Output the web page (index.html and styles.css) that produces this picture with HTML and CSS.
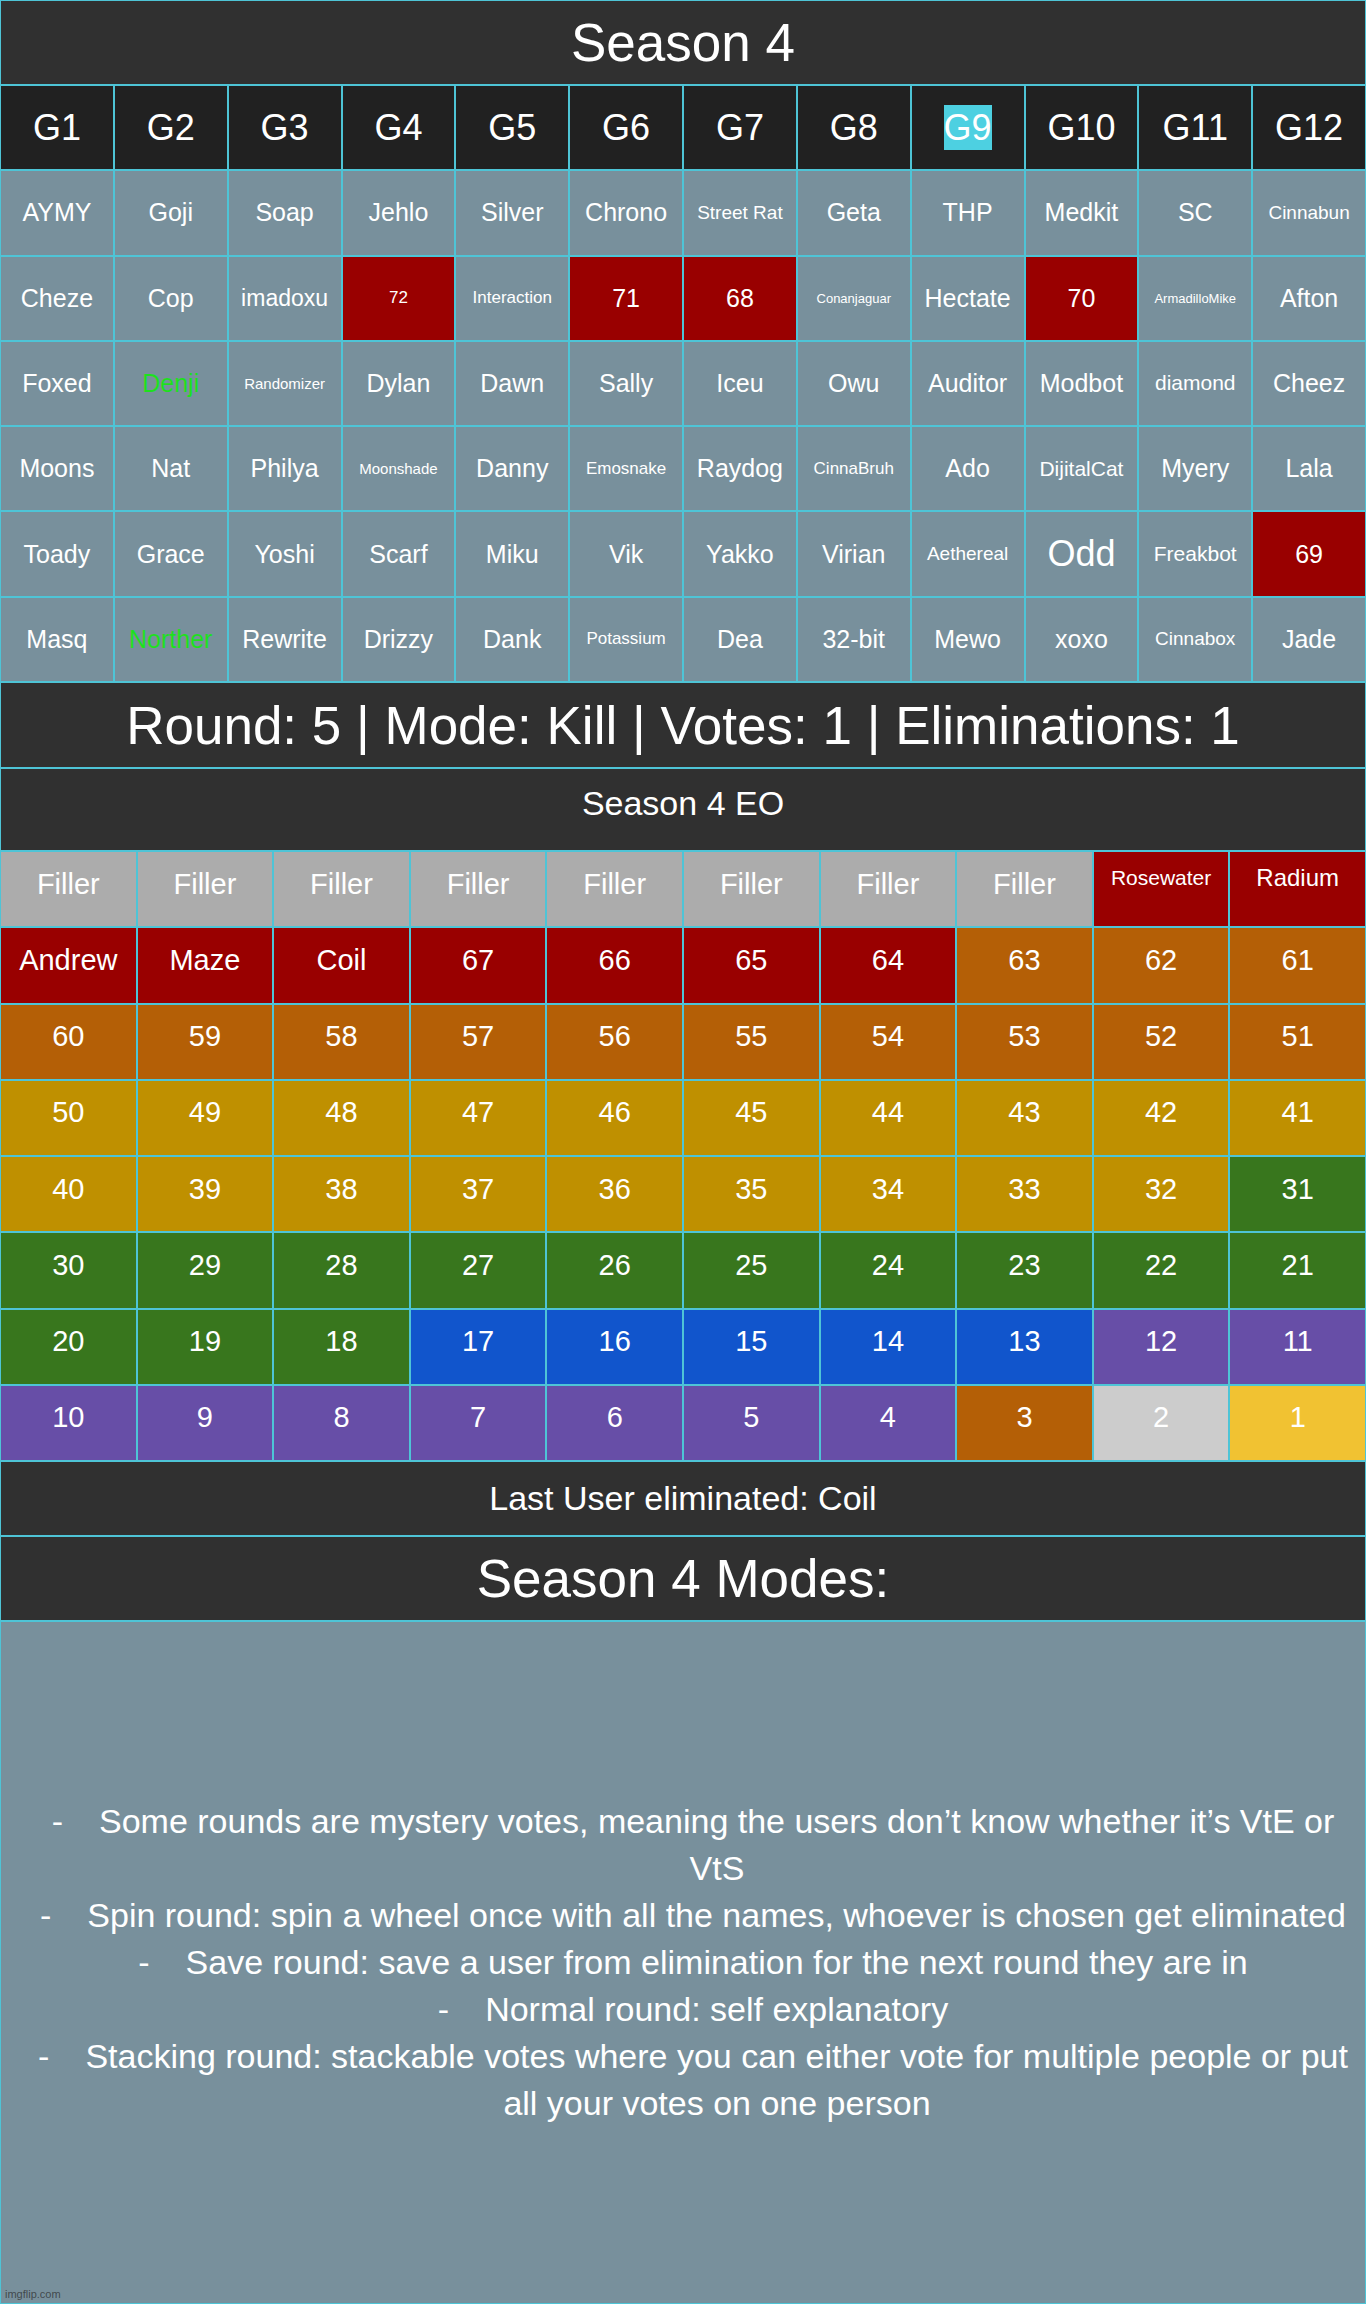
FILE: index.html
```html
<!DOCTYPE html>
<html lang="en">
<head>
    <meta charset="UTF-8">
    <meta name="viewport" content="width=device-width, initial-scale=1.0">
    <title>Season 4</title>
    <link rel="stylesheet" href="styles.css">
</head>
<body>
    <div class="board">
        <div class="banner banner-big">Season 4</div>

        <!-- Groups -->
        <div class="groups">
            <div class="gh">G1</div>
            <div class="gh">G2</div>
            <div class="gh">G3</div>
            <div class="gh">G4</div>
            <div class="gh">G5</div>
            <div class="gh">G6</div>
            <div class="gh">G7</div>
            <div class="gh">G8</div>
            <div class="gh"><span class="current">G9</span></div>
            <div class="gh">G10</div>
            <div class="gh">G11</div>
            <div class="gh">G12</div>

            <div class="cell">AYMY</div>
            <div class="cell">Goji</div>
            <div class="cell">Soap</div>
            <div class="cell">Jehlo</div>
            <div class="cell">Silver</div>
            <div class="cell">Chrono</div>
            <div class="cell s19">Street Rat</div>
            <div class="cell">Geta</div>
            <div class="cell">THP</div>
            <div class="cell">Medkit</div>
            <div class="cell">SC</div>
            <div class="cell s19">Cinnabun</div>

            <div class="cell">Cheze</div>
            <div class="cell">Cop</div>
            <div class="cell s23">imadoxu</div>
            <div class="cell out s17">72</div>
            <div class="cell s17">Interaction</div>
            <div class="cell out">71</div>
            <div class="cell out">68</div>
            <div class="cell s13">Conanjaguar</div>
            <div class="cell">Hectate</div>
            <div class="cell out">70</div>
            <div class="cell s13">ArmadilloMike</div>
            <div class="cell">Afton</div>

            <div class="cell">Foxed</div>
            <div class="cell safe">Denji</div>
            <div class="cell s15">Randomizer</div>
            <div class="cell">Dylan</div>
            <div class="cell">Dawn</div>
            <div class="cell">Sally</div>
            <div class="cell">Iceu</div>
            <div class="cell">Owu</div>
            <div class="cell">Auditor</div>
            <div class="cell">Modbot</div>
            <div class="cell s21">diamond</div>
            <div class="cell">Cheez</div>

            <div class="cell">Moons</div>
            <div class="cell">Nat</div>
            <div class="cell">Philya</div>
            <div class="cell s15">Moonshade</div>
            <div class="cell">Danny</div>
            <div class="cell s17">Emosnake</div>
            <div class="cell">Raydog</div>
            <div class="cell s17">CinnaBruh</div>
            <div class="cell">Ado</div>
            <div class="cell s21">DijitalCat</div>
            <div class="cell">Myery</div>
            <div class="cell">Lala</div>

            <div class="cell">Toady</div>
            <div class="cell">Grace</div>
            <div class="cell">Yoshi</div>
            <div class="cell">Scarf</div>
            <div class="cell">Miku</div>
            <div class="cell">Vik</div>
            <div class="cell">Yakko</div>
            <div class="cell">Virian</div>
            <div class="cell s19">Aethereal</div>
            <div class="cell s36">Odd</div>
            <div class="cell s21">Freakbot</div>
            <div class="cell out">69</div>

            <div class="cell">Masq</div>
            <div class="cell safe">Norther</div>
            <div class="cell">Rewrite</div>
            <div class="cell">Drizzy</div>
            <div class="cell">Dank</div>
            <div class="cell s17">Potassium</div>
            <div class="cell">Dea</div>
            <div class="cell">32-bit</div>
            <div class="cell">Mewo</div>
            <div class="cell">xoxo</div>
            <div class="cell s19">Cinnabox</div>
            <div class="cell">Jade</div>
        </div>

        <div class="banner banner-round">Round: 5 | Mode: Kill | Votes: 1 | Eliminations: 1</div>
        <div class="banner banner-eo">Season 4 EO</div>

        <!-- Elimination order -->
        <div class="eo">
            <div class="place filler">Filler</div>
            <div class="place filler">Filler</div>
            <div class="place filler">Filler</div>
            <div class="place filler">Filler</div>
            <div class="place filler">Filler</div>
            <div class="place filler">Filler</div>
            <div class="place filler">Filler</div>
            <div class="place filler">Filler</div>
            <div class="place red top s21">Rosewater</div>
            <div class="place red top s24">Radium</div>

            <div class="place red">Andrew</div>
            <div class="place red">Maze</div>
            <div class="place red">Coil</div>
            <div class="place red">67</div>
            <div class="place red">66</div>
            <div class="place red">65</div>
            <div class="place red">64</div>
            <div class="place orange">63</div>
            <div class="place orange">62</div>
            <div class="place orange">61</div>

            <div class="place orange">60</div>
            <div class="place orange">59</div>
            <div class="place orange">58</div>
            <div class="place orange">57</div>
            <div class="place orange">56</div>
            <div class="place orange">55</div>
            <div class="place orange">54</div>
            <div class="place orange">53</div>
            <div class="place orange">52</div>
            <div class="place orange">51</div>

            <div class="place gold">50</div>
            <div class="place gold">49</div>
            <div class="place gold">48</div>
            <div class="place gold">47</div>
            <div class="place gold">46</div>
            <div class="place gold">45</div>
            <div class="place gold">44</div>
            <div class="place gold">43</div>
            <div class="place gold">42</div>
            <div class="place gold">41</div>

            <div class="place gold">40</div>
            <div class="place gold">39</div>
            <div class="place gold">38</div>
            <div class="place gold">37</div>
            <div class="place gold">36</div>
            <div class="place gold">35</div>
            <div class="place gold">34</div>
            <div class="place gold">33</div>
            <div class="place gold">32</div>
            <div class="place green">31</div>

            <div class="place green">30</div>
            <div class="place green">29</div>
            <div class="place green">28</div>
            <div class="place green">27</div>
            <div class="place green">26</div>
            <div class="place green">25</div>
            <div class="place green">24</div>
            <div class="place green">23</div>
            <div class="place green">22</div>
            <div class="place green">21</div>

            <div class="place green">20</div>
            <div class="place green">19</div>
            <div class="place green">18</div>
            <div class="place blue">17</div>
            <div class="place blue">16</div>
            <div class="place blue">15</div>
            <div class="place blue">14</div>
            <div class="place blue">13</div>
            <div class="place purple">12</div>
            <div class="place purple">11</div>

            <div class="place purple">10</div>
            <div class="place purple">9</div>
            <div class="place purple">8</div>
            <div class="place purple">7</div>
            <div class="place purple">6</div>
            <div class="place purple">5</div>
            <div class="place purple">4</div>
            <div class="place orange">3</div>
            <div class="place silver">2</div>
            <div class="place yellow">1</div>
        </div>

        <div class="banner banner-last">Last User eliminated: Coil</div>
        <div class="banner banner-big">Season 4 Modes:</div>

        <div class="modes">
            <div class="rule"><span class="dash">-</span>Some rounds are mystery votes, meaning the users don’t know whether it’s VtE or VtS</div>
            <div class="rule"><span class="dash">-</span>Spin round: spin a wheel once with all the names, whoever is chosen get eliminated</div>
            <div class="rule"><span class="dash">-</span>Save round: save a user from elimination for the next round they are in</div>
            <div class="rule"><span class="dash">-</span>Normal round: self explanatory</div>
            <div class="rule"><span class="dash">-</span>Stacking round: stackable votes where you can either vote for multiple people or put all your votes on one person</div>
            <span class="watermark">imgflip.com</span>
        </div>
    </div>
</body>
</html>
```

FILE: styles.css
```css
/* Global */
body {
    margin: 0;
    padding: 0;
    font-family: "Liberation Sans", Arial, sans-serif;
    color: #ffffff;
    background: #4ec4d6;
}

/* The whole board, cyan shows through the gaps as grid lines */
.board {
    width: 1366px;
    height: 2304px;
    box-sizing: border-box;
    padding: 1px;
    display: flex;
    flex-direction: column;
    gap: 2px;
    background: #4ec4d6;
}

/* Dark title bars */
.banner {
    background: #303030;
    display: flex;
    align-items: center;
    justify-content: center;
    white-space: nowrap;
}

.banner-big {
    height: 83px;
    font-size: 53px;
}

.banner-round {
    height: 84px;
    font-size: 53px;
}

.banner-eo {
    height: 81px;
    font-size: 34px;
    padding-bottom: 12px;
    box-sizing: border-box;
}

.banner-last {
    height: 73px;
    font-size: 34px;
}

/* Groups table */
.groups {
    height: 595px;
    display: grid;
    grid-template-columns: repeat(12, 1fr);
    grid-template-rows: repeat(7, 1fr);
    gap: 2px;
}

.gh,
.cell {
    display: flex;
    align-items: center;
    justify-content: center;
    white-space: nowrap;
    overflow: hidden;
}

.gh {
    background: #212121;
    font-size: 36px;
}

.gh .current {
    background: #4dd0e1;
    line-height: 45px;
}

.cell {
    background: #78909c;
    font-size: 25px;
}

.cell.out {
    background: #990000;
}

.cell.safe {
    color: #1ee01e;
}

/* Elimination order */
.eo {
    height: 608px;
    display: grid;
    grid-template-columns: repeat(10, 1fr);
    grid-template-rows: repeat(8, 1fr);
    gap: 2px;
}

.place {
    display: flex;
    align-items: center;
    justify-content: center;
    font-size: 29px;
    padding-bottom: 10px;
    white-space: nowrap;
}

.place.top {
    padding-bottom: 22px;
}

.filler { background: #acacac; }
.red { background: #990000; }
.orange { background: #b45f06; }
.gold { background: #bf9000; }
.green { background: #38761d; }
.blue { background: #1155cc; }
.purple { background: #674ea7; }
.silver { background: #cccccc; }
.yellow { background: #f1c232; }

/* shrunk names, must win over the cell defaults */
.cell.s13 { font-size: 13px; }
.cell.s15 { font-size: 15px; }
.cell.s17 { font-size: 17px; }
.cell.s19 { font-size: 19px; }
.cell.s21,
.place.s21 { font-size: 21px; }
.cell.s23 { font-size: 23px; }
.place.s24 { font-size: 24px; }
.cell.s36 { font-size: 36px; }

/* Modes list */
.modes {
    position: relative;
    flex: 1;
    background: #78909c;
    display: flex;
    flex-direction: column;
    justify-content: center;
    padding: 0 10px 0 78px;
    font-size: 34px;
    line-height: 47px;
    text-align: center;
}

.rule {
    text-indent: -48px;
}

.dash {
    margin-right: 36px;
}

.watermark {
    position: absolute;
    left: 4px;
    bottom: 2px;
    font-size: 11px;
    line-height: 14px;
    color: rgba(40, 40, 40, 0.7);
}
```
